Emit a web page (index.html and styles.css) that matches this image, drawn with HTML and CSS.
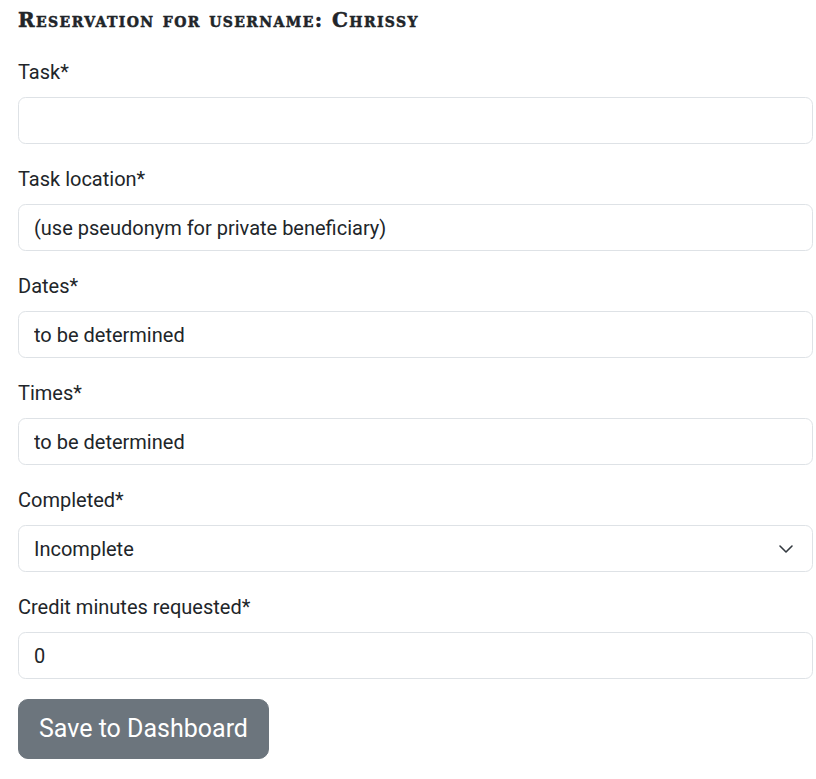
FILE: index.html
```html
<!DOCTYPE html>
<html lang="en">
<head>
<meta charset="utf-8">
<title>Reservation</title>
<link rel="stylesheet" href="styles.css">
</head>
<body>
<main class="page">
  <h1 class="title">Reservation for username: Chrissy</h1>
  <form class="form">
    <div class="group">
      <label class="label" for="task">Task*</label>
      <input class="control" id="task" type="text" value="">
    </div>
    <div class="group">
      <label class="label" for="loc">Task location*</label>
      <input class="control" id="loc" type="text" value="(use pseudonym for private beneficiary)">
    </div>
    <div class="group">
      <label class="label" for="dates">Dates*</label>
      <input class="control" id="dates" type="text" value="to be determined">
    </div>
    <div class="group">
      <label class="label" for="times">Times*</label>
      <input class="control" id="times" type="text" value="to be determined">
    </div>
    <div class="group">
      <label class="label" for="done">Completed*</label>
      <div class="select-wrap">
        <select class="control select" id="done">
          <option>Incomplete</option>
          <option>Complete</option>
        </select>
        <svg class="chevron" viewBox="0 0 16 16" width="16" height="16" aria-hidden="true"><path d="M2 5l6 6 6-6" fill="none" stroke="#343a40" stroke-width="1.6" stroke-linecap="round" stroke-linejoin="round"/></svg>
      </div>
    </div>
    <div class="group">
      <label class="label" for="mins">Credit minutes requested*</label>
      <input class="control" id="mins" type="text" value="0">
    </div>
    <button class="btn" type="button">Save to Dashboard</button>
  </form>
</main>
</body>
</html>
```
FILE: styles.css
```css
* { box-sizing: border-box; }
html, body { margin: 0; padding: 0; background: #fff; }
body {
  font-family: Roboto, "Open Sans", sans-serif;
  font-size: 20px;
  line-height: 30px;
  color: #212529;
}
.page {
  padding: 8px 3px 0 18px;
}
.title {
  margin: 0 0 25px 0;
  font-family: "DejaVu Serif", serif;
  font-weight: bold;
  font-variant: small-caps;
  font-size: 20px;
  line-height: 24px;
  letter-spacing: 1.4px;
  -webkit-text-stroke: 0.5px #212529;
  color: #212529;
}
.form { display: flex; flex-direction: column; }
.group { display: flex; flex-direction: column; margin-bottom: 20px; }
.label { display: block; margin-bottom: 10px; font-size: 20px; line-height: 30px; }
.control {
  display: block;
  width: 100%;
  height: 47px;
  padding: 7.5px 15px;
  font-family: inherit;
  font-size: 20px;
  line-height: 30px;
  color: #212529;
  background: #fff;
  border: 1px solid #dee2e6;
  border-radius: 7.5px;
  outline: none;
}
.select-wrap { position: relative; }
.select { appearance: none; -webkit-appearance: none; padding-right: 50px; }
.chevron { position: absolute; right: 19px; top: 15.5px; pointer-events: none; }
.btn {
  align-self: flex-start;
  height: 60px;
  padding: 10px 20px;
  font-family: inherit;
  font-size: 25px;
  line-height: 37.5px;
  color: #fff;
  background: #6c757d;
  border: 1px solid #6c757d;
  border-radius: 10px;
}
```
